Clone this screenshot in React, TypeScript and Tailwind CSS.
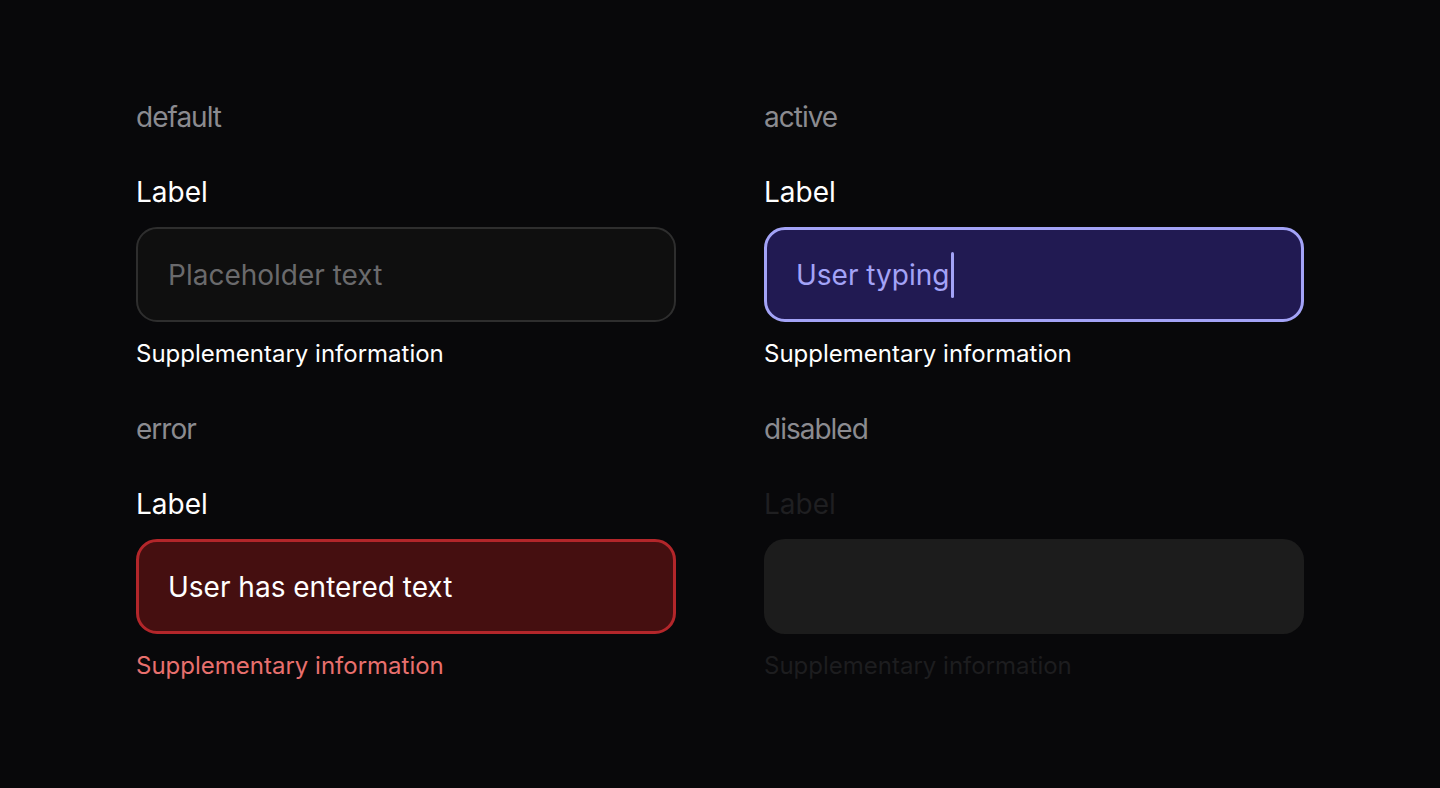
import React from 'react';

type State = 'default' | 'active' | 'error' | 'disabled';

function Field({ state }: { state: State }) {
  const label =
    state === 'disabled' ? 'text-[#1f1f21]' : 'text-white';

  const box = {
    default: 'bg-[#0f0f0f] border-2 border-[#2e2e2e]',
    active: 'bg-[#211a52] border-[3px] border-[#a3a3f7]',
    error: 'bg-[#450f10] border-[3px] border-[#b3262a]',
    disabled: 'bg-[#1c1c1c] border-0',
  }[state];

  const help = {
    default: 'text-white',
    active: 'text-white',
    error: 'text-[#e8706e]',
    disabled: 'text-[#1d1d1f]',
  }[state];

  return (
    <div className="flex flex-col">
      <div className="text-[28px] leading-[32px] text-[#8b8b90] tracking-[-1px]">{state}</div>
      <div className={`mt-[42px] text-[28px] leading-[34px] ${label}`}>Label</div>
      <div className={`mt-[18px] h-[95px] rounded-[21px] flex items-center pl-[29px] ${box}`}>
        {state === 'default' && (
          <span className="pl-[1px] text-[28px] text-[#6a6a6c]">Placeholder text</span>
        )}
        {state === 'active' && (
          <span className="flex items-center text-[28px] text-[#a3a3f7]">
            User typing
            <span className="ml-[2px] inline-block w-[3px] h-[46px] rounded-full bg-[#a3a3f7]" />
          </span>
        )}
        {state === 'error' && (
          <span className="text-[28px] text-white">User has entered text</span>
        )}
      </div>
      <div className={`mt-[17px] text-[24px] leading-[30px] ${help}`}>Supplementary information</div>
    </div>
  );
}

export default function App() {
  return (
    <div
      className="min-h-screen w-full bg-[#08080a] pt-[101px] pl-[136px]"
      style={{ fontFamily: 'Inter, "Noto Sans", sans-serif' }}
    >
      <div className="grid grid-cols-[540px_540px] gap-x-[88px] gap-y-[44px]">
        <Field state="default" />
        <Field state="active" />
        <Field state="error" />
        <Field state="disabled" />
      </div>
    </div>
  );
}
